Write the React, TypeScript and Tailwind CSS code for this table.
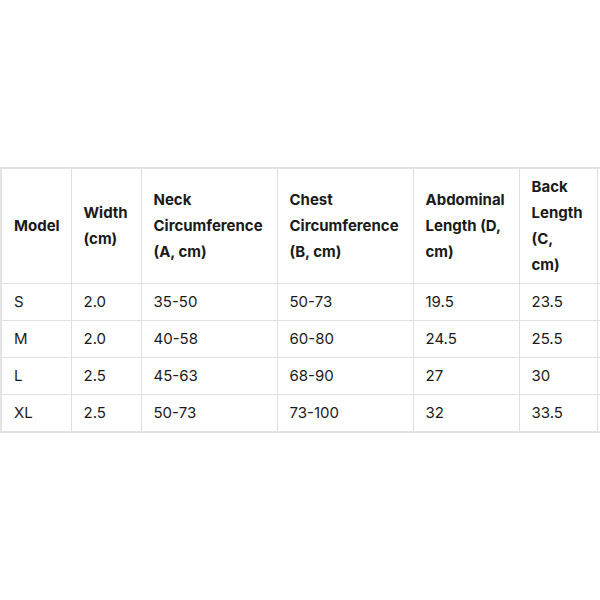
const columns = [
  { label: "Model", width: 70 },
  { label: "Width (cm)", width: 70 },
  { label: "Neck Circumference (A, cm)", width: 136 },
  { label: "Chest Circumference (B, cm)", width: 136 },
  { label: "Abdominal Length (D, cm)", width: 106 },
  { label: "Back Length (C, cm)", width: 78 },
  { label: "", width: 110 },
];

const rows = [
  ["S", "2.0", "35-50", "50-73", "19.5", "23.5", ""],
  ["M", "2.0", "40-58", "60-80", "24.5", "25.5", ""],
  ["L", "2.5", "45-63", "68-90", "27", "30", ""],
  ["XL", "2.5", "50-73", "73-100", "32", "33.5", ""],
];

const App = () => {
  return (
    <div
      className="h-[600px] w-[600px] overflow-hidden bg-white flex items-center"
      style={{ fontFamily: "Inter, 'Noto Sans', sans-serif" }}
    >
      <table className="table-fixed border-collapse border-2 border-[#e3e3e3] text-[15px] leading-[26px] text-[#1a1a1a] shrink-0 w-[706px]">
        <colgroup>
          {columns.map((c, i) => (
            <col key={i} style={{ width: c.width }} />
          ))}
        </colgroup>
        <thead>
          <tr>
            {columns.map((c, i) => (
              <th
                key={i}
                className="border border-[#e0e0e0] pl-[12px] pr-3 py-[5px] text-left align-middle font-bold"
              >
                {c.label}
              </th>
            ))}
          </tr>
        </thead>
        <tbody>
          {rows.map((row) => (
            <tr key={row[0]}>
              {row.map((cell, i) => (
                <td
                  key={i}
                  className="border border-[#e0e0e0] px-3 py-[5px] text-left align-middle font-normal"
                >
                  {cell}
                </td>
              ))}
            </tr>
          ))}
        </tbody>
      </table>
    </div>
  );
};

export default App;
